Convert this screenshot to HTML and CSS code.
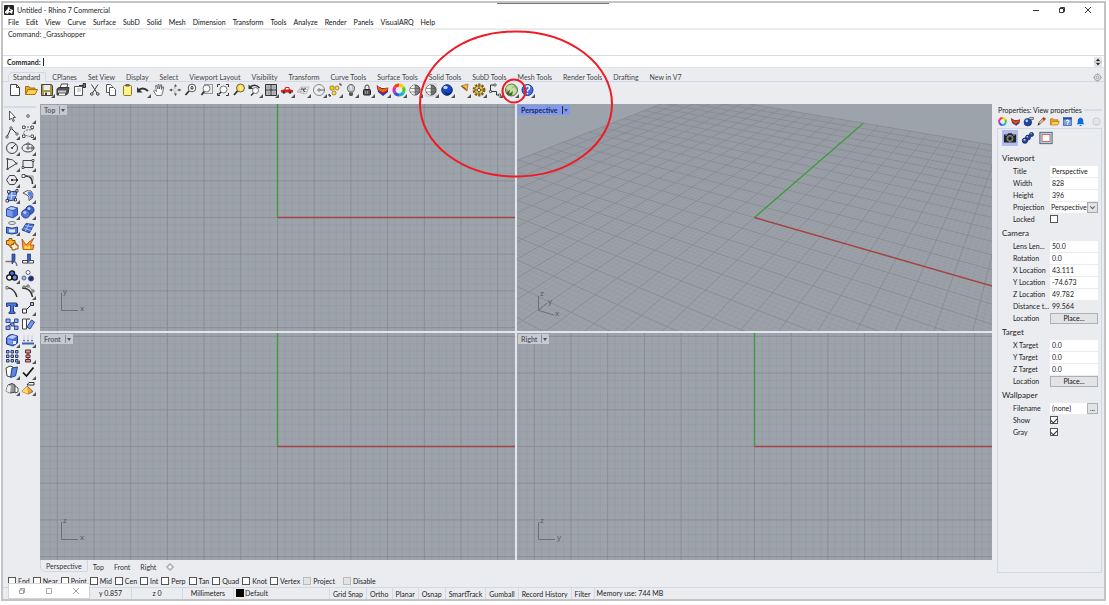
FILE: index.html
```html
<!DOCTYPE html>
<html lang="en">
<head>
<meta charset="utf-8">
<title>Untitled - Rhino 7 Commercial</title>
<link rel="stylesheet" href="styles.css">
</head>
<body>
<div class="window">
  <header class="titlebar">
    <svg class="logo" viewBox="0 0 10 10"><rect width="10" height="10" rx="1" fill="#222"/><path d="M1 8C1 5 3 6 4 3L5 1 6 4 9 5 8 9 5 7 4 9Z" fill="#fff"/><path d="M5 4L7 6 5 6Z" fill="#222"/></svg>
    <h1 class="title">Untitled - Rhino 7 Commercial</h1>
    <div class="winbuttons">
      <button class="winbutton" aria-label="Minimize"><svg viewBox="0 0 8 8"><path d="M1 4.500H7" stroke="#333"/></svg></button>
      <button class="winbutton" aria-label="Restore"><svg viewBox="0 0 8 8"><path d="M1.500 2.500H5.500V6.500H1.500ZM2.500 2V1.500H6.500V5.500H6" fill="none" stroke="#333"/></svg></button>
      <button class="winbutton" aria-label="Close"><svg viewBox="0 0 8 8"><path d="M1 1L7 7M7 1L1 7" stroke="#333"/></svg></button>
    </div>
  </header>
  <nav class="menubar">
    <button>File</button><button>Edit</button><button>View</button><button>Curve</button><button>Surface</button><button>SubD</button><button>Solid</button><button>Mesh</button><button>Dimension</button><button>Transform</button><button>Tools</button><button>Analyze</button><button>Render</button><button>Panels</button><button>VisualARQ</button><button>Help</button>
  </nav>
  <section class="history">Command: _Grasshopper</section>
  <div class="prompt">
    <label for="command">Command:</label>
    <i class="caret"></i>
    <input id="command" type="text">
    <button class="spin" aria-label="Scroll history"><svg viewBox="0 0 8 10"><path d="M0 5H8" stroke="#aaa"/><path d="M2 4L4 1.500 6 4ZM2 6L4 8.500 6 6Z" fill="#222"/></svg></button>
  </div>
  <nav class="tabs">
    <button class="tab current">Standard</button><button class="tab">CPlanes</button><button class="tab">Set View</button><button class="tab">Display</button><button class="tab">Select</button><button class="tab">Viewport Layout</button><button class="tab">Visibility</button><button class="tab">Transform</button><button class="tab">Curve Tools</button><button class="tab">Surface Tools</button><button class="tab">Solid Tools</button><button class="tab">SubD Tools</button><button class="tab">Mesh Tools</button><button class="tab">Render Tools</button><button class="tab">Drafting</button><button class="tab">New in V7</button>
    <button class="gear" aria-label="Toolbar options"><svg viewBox="0 0 10 10"><circle cx="5" cy="5" r="3.500" fill="none" stroke="#999"/><circle cx="5" cy="5" r="1.500" fill="none" stroke="#999"/><path d="M5 0V2M5 8V10M0 5H2M8 5H10" stroke="#aaa"/></svg></button>
  </nav>
  <div class="toolbar">
    <button class="tool" aria-label="New"><svg viewBox="0 0 16 16"><path d="M3.500 2.500H9.500L12.500 5.500V13.500H3.500Z" fill="#fff" stroke="#444"/><path d="M9.500 2.500V5.500H12.500" fill="none" stroke="#444"/></svg></button>
    <button class="tool" aria-label="Open"><svg viewBox="0 0 16 16"><path d="M2.500 12.500V4.500H6L7 6H12V8" fill="#e9a91e" stroke="#a87010"/><path d="M2.500 12.500L5 7.500H14.500L12 12.500Z" fill="#ffd152" stroke="#a87010"/></svg></button>
    <button class="tool fly" aria-label="Save"><svg viewBox="0 0 16 16"><path d="M2.500 2.500H12.500L13.500 4V13.500H2.500Z" fill="#a9993a" stroke="#444"/><path d="M4.500 3H11V8H4.500Z" fill="#e6ecf8"/><path d="M5 10H11V13H5Z" fill="#eee"/><path d="M6 10.500H8V13H6Z" fill="#444"/></svg></button>
    <button class="tool" aria-label="Print"><svg viewBox="0 0 16 16"><path d="M5 6L6.500 2H13L11.500 6Z" fill="#fff" stroke="#444"/><path d="M2 7L4 5.500H14L13 11.500 11 13H2Z" fill="#555" stroke="#333"/><path d="M3 8.500H11V10.500H3Z" fill="#ccc"/><path d="M4 11.500H10V13H4Z" fill="#fff"/></svg></button>
    <button class="tool" aria-label="Document properties"><svg viewBox="0 0 16 16"><path d="M3.500 4.500H11.500V13.500H3.500Z" fill="#fff" stroke="#555"/><path d="M6 7H10M6 9H10" stroke="#aaa"/><path d="M8 3.500H12M12 1.500H14.500V5.500H12Z" fill="#777" stroke="#333"/></svg></button>
    <button class="tool" aria-label="Cut"><svg viewBox="0 0 16 16"><path d="M4.500 2.500L10 11M11 2.500L5.500 11" stroke="#444"/><circle cx="4.800" cy="12" r="1.300" fill="none" stroke="#444"/><circle cx="10.800" cy="12" r="1.300" fill="none" stroke="#444"/></svg></button>
    <button class="tool" aria-label="Copy"><svg viewBox="0 0 16 16"><path d="M3.500 2.500H7.500L9.500 4.500V10.500H3.500Z" fill="#fff" stroke="#555"/><path d="M6.500 5.500H10.500L12.500 7.500V13.500H6.500Z" fill="#fff" stroke="#555"/></svg></button>
    <button class="tool" aria-label="Paste"><svg viewBox="0 0 16 16"><rect x="4.500" y="3.500" width="8" height="10" rx="1" fill="#fff38a" stroke="#8a7a20"/><path d="M6.500 2H10.500V4.500H6.500Z" fill="#666"/></svg></button>
    <button class="tool fly" aria-label="Undo"><svg viewBox="0 0 16 16"><path d="M4 8Q8 4.500 13 9" fill="none" stroke="#333" stroke-width="2"/><path d="M2 5V10.500H7.500Z" fill="#333"/></svg></button>
    <button class="tool" aria-label="Pan"><svg viewBox="0 0 16 16"><path d="M5.500 13.500L2.500 9 3.500 8 5.500 9.500 4.500 3.500 5.500 3.300 7 7V2.500H8L8.500 7 9.500 2.800H10.500V7.500L11.800 4.500 12.700 5 11.500 11 10.500 13.500Z" fill="#fff" stroke="#555" stroke-width=".8"/></svg></button>
    <button class="tool" aria-label="Rotate view"><svg viewBox="0 0 16 16"><path d="M8 4V12M4 8H12" stroke="#999"/><path d="M8.500 2L7 4.500H10ZM8.500 14L7 11.500H10ZM2 8L5 6.500V9.500ZM14.500 8L11.500 6.500V9.500Z" fill="#555"/><path d="M7 6.500H10V9.500H7Z" fill="#dde3e6"/></svg></button>
    <button class="tool" aria-label="Zoom dynamic"><svg viewBox="0 0 16 16"><circle cx="9" cy="6" r="3.800" fill="#f8fafb" stroke="#555"/><path d="M6 9L2.500 13" stroke="#333" stroke-width="1.800"/><path d="M9 4V8M7.500 5.500L9 4 10.500 5.500M7.500 6.500H10.500" fill="none" stroke="#555"/></svg></button>
    <button class="tool" aria-label="Zoom window"><svg viewBox="0 0 16 16"><path d="M5.500 2.500H13.500V11.500H5.500Z" fill="none" stroke="#444" stroke-dasharray="1 1"/><circle cx="7.500" cy="6.500" r="3.500" fill="#f8fafb" stroke="#777"/><path d="M5 9.500L2.500 13" stroke="#333" stroke-width="1.800"/></svg></button>
    <button class="tool" aria-label="Zoom extents"><svg viewBox="0 0 16 16"><path d="M2.500 5V2.500H5M11 2.500H13.500V5M2.500 11V13.500H5M11 13.500H13.500V11" fill="none" stroke="#333"/><circle cx="8.500" cy="7.500" r="3.500" fill="#f8fafb" stroke="#777"/><path d="M6 10L3.500 12.500" stroke="#333" stroke-width="1.500"/></svg></button>
    <button class="tool" aria-label="Zoom selected"><svg viewBox="0 0 16 16"><circle cx="9.500" cy="6" r="4" fill="#ffd94d" stroke="#666"/><path d="M9.500 3.500L12 6 9.500 8.500 7.500 6Z" fill="#fff08c"/><path d="M6.500 9L3 13" stroke="#333" stroke-width="1.800"/></svg></button>
    <button class="tool fly" aria-label="Undo view change"><svg viewBox="0 0 16 16"><path d="M3 5Q8 1 12.500 6" fill="none" stroke="#333" stroke-width="1.500"/><path d="M1.500 2.500V7H6.500Z" fill="#333"/><circle cx="8.500" cy="8.500" r="3" fill="#fafafa" stroke="#777"/><path d="M6.500 11L4 13.500" stroke="#333" stroke-width="1.500"/></svg></button>
    <button class="tool fly" aria-label="Four viewports"><svg viewBox="0 0 16 16"><path d="M2.500 2.500H13.500V13.500H2.500ZM8 2.500V13.500M2.500 8H13.500" fill="#b8bbc1" stroke="#333"/><path d="M5.500 3V13M11 3V13M3 5.500H13M3 11H13" stroke="#999" stroke-width=".5"/></svg></button>
    <button class="tool fly" aria-label="Right view"><svg viewBox="0 0 16 16"><path d="M2 8L5 7.500 6.500 5H10L11 7.500 14 8V10.500H2Z" fill="#d8221c"/><path d="M7 6H9.500V7.500H6.500Z" fill="#fff"/><circle cx="5" cy="10.500" r="1.300" fill="#333"/><circle cx="11" cy="10.500" r="1.300" fill="#333"/></svg></button>
    <button class="tool fly" aria-label="Construction plane"><svg viewBox="0 0 16 16"><path d="M2 10L6 5H14L11 12ZM4 7.500H13M3 9L12 9.500M7 5L5.500 11M10 5L8.500 12" fill="none" stroke="#aaa" stroke-width=".7"/><path d="M8 8L11 6M8 8L10 10M6 7H9" stroke="#555"/></svg></button>
    <button class="tool fly" aria-label="Object snap"><svg viewBox="0 0 16 16"><circle cx="8" cy="8" r="5.500" fill="#eeeff2" stroke="#888"/><path d="M8 8H14" stroke="#666"/><path d="M7 7H9V9H7Z" fill="#fff" stroke="#777"/></svg></button>
    <button class="tool fly" aria-label="Select"><svg viewBox="0 0 16 16"><rect x="3" y="4" width="4" height="4" rx="1" fill="#ffca2c" stroke="#8a6500" stroke-width=".7"/><rect x="8" y="4" width="4" height="4" rx="2" fill="#ffdc55" stroke="#8a6500" stroke-width=".7"/><rect x="5" y="9" width="4" height="4" rx="2" fill="#ffdc55" stroke="#8a6500" stroke-width=".7"/><path d="M12 2H14V4M2 12L4 14H2Z" fill="none" stroke="#333"/></svg></button>
    <button class="tool fly" aria-label="Hide"><svg viewBox="0 0 16 16"><path d="M6 10C3 7 4.500 2.500 8 2.500S13 7 10 10Z" fill="#bfc2c7" stroke="#666"/><path d="M6 10.500H10V13L9 14H7L6 13Z" fill="#555"/><path d="M7 5L8 4V8" fill="none" stroke="#fff"/></svg></button>
    <button class="tool fly" aria-label="Lock"><svg viewBox="0 0 16 16"><path d="M6 8V5Q6 3 8 3T10 5V8" fill="none" stroke="#444"/><rect x="4.500" y="7.500" width="7" height="5.500" rx="1" fill="#555" stroke="#222"/><path d="M6.500 9V12M8.500 9V12" stroke="#999"/></svg></button>
    <button class="tool fly" aria-label="Layers"><svg viewBox="0 0 16 16"><path d="M2 4L7 6 13 5V10L8 14 3 10Z" fill="#263b9c"/><path d="M2 3.500L7 7 13 5.500 12.500 8.500 8 11 3 8Z" fill="#f36a1c" stroke="#a02a12" stroke-width=".7"/><path d="M3 3.500L8 5.500 13 5" fill="none" stroke="#fff"/><path d="M3 8L8 11 13 8.500" fill="none" stroke="#c52020"/></svg></button>
    <button class="tool fly" aria-label="Object colour"><svg viewBox="0 0 16 16" fill="none" stroke-width="3"><path d="M8 3A5 5 0 0 1 12.300 5.500" stroke="#ffd000"/><path d="M12.300 5.500A5 5 0 0 1 12.300 10.500" stroke="#4cc828"/><path d="M12.300 10.500A5 5 0 0 1 8 13" stroke="#14b4d6"/><path d="M8 13A5 5 0 0 1 3.700 10.500" stroke="#3354e6"/><path d="M3.700 10.500A5 5 0 0 1 3.700 5.500" stroke="#d425bd"/><path d="M3.700 5.500A5 5 0 0 1 8 3" stroke="#fa3c22"/></svg></button>
    <button class="tool fly" aria-label="Shaded display"><svg viewBox="0 0 16 16"><circle cx="8" cy="8" r="5" fill="#888" stroke="#444"/><path d="M8 3A5 5 0 0 0 8 13Z" fill="#f5f5f5"/><path d="M8 3V13M3 6.500H13M3 10H13" stroke="#555" stroke-width=".6"/></svg></button>
    <button class="tool fly" aria-label="Rendered display"><svg viewBox="0 0 16 16"><path d="M2 1H14V15H2Z" fill="#d9dadd"/><circle cx="8" cy="8" r="5" fill="#777" stroke="#444"/><path d="M8 3A5 5 0 0 0 8 13Z" fill="#fff"/><path d="M8 3V13M3 6.500H13M3 10H13" stroke="#555" stroke-width=".6"/></svg></button>
    <button class="tool fly" aria-label="Render"><svg viewBox="0 0 16 16"><circle cx="8" cy="8" r="5.300" fill="#1448c4" stroke="#102a70"/><path d="M5 10Q11 13 13 8Q12 13 8 13Z" fill="#0a1d62"/><ellipse cx="6.500" cy="5.500" rx="2.200" ry="1.700" fill="#b9d5ff"/></svg></button>
    <button class="tool fly" aria-label="Spotlight"><svg viewBox="0 0 16 16"><path d="M6 4L13 2 12 9Z" fill="#ffb735" stroke="#8a6420" stroke-width=".7"/><path d="M6 4L9 5 11 7 12 9Z" fill="#694b1d"/></svg></button>
    <button class="tool fly" aria-label="Options"><svg viewBox="0 0 16 16"><circle cx="8" cy="8" r="5.200" fill="none" stroke="#806214" stroke-width="2.500" stroke-dasharray="2.200 1.100"/><circle cx="8" cy="8" r="4.300" fill="#efca50" stroke="#71530c" stroke-width=".7"/><circle cx="8" cy="8" r="1.600" fill="#fff" stroke="#555"/><path d="M8 4V6M4 8H6M10 8H12M8 10V12" stroke="#765a15"/></svg></button>
    <button class="tool fly" aria-label="Block edit"><svg viewBox="0 0 16 16"><path d="M7.500 3H3.500V9.500H9.500V13H13" fill="none" stroke="#333"/><path d="M7 2H9V4H7ZM2.500 8.500H4.500V10.500H2.500ZM11.500 12H13.500V14H11.500Z" fill="#fff" stroke="#333" stroke-width=".7"/></svg></button>
    <button class="tool fly" aria-label="Grasshopper"><svg viewBox="0 0 16 16"><circle cx="8.500" cy="8" r="6" fill="#9aba70" stroke="#5e793f"/><path d="M3 6Q6 1.500 11 3L8 7 11 5 14 8 12 12 9 13Z" fill="#c6dda8"/><path d="M3 11L7 7.500 6 12 10 9 9 13.500H5Z" fill="#46632e"/></svg></button>
    <button class="tool fly" aria-label="Help"><svg viewBox="0 0 16 16"><circle cx="8.500" cy="8" r="5.500" fill="#3f6ce0" stroke="#1c3a96"/><path d="M6.500 6Q6.500 4 8.500 4T10.500 6Q10.500 7.200 8.500 8.300V9.500M8.500 11V12.300" fill="none" stroke="#fff" stroke-width="1.500"/></svg></button>
  </div>

  <main class="main">
    <aside class="palette">
      <button class="tool" aria-label="Cancel"><svg viewBox="0 0 16 16"><path d="M5.500 3V12L7.500 10 9 13.500 10.300 13 9 9.500H11.500Z" fill="#fff" stroke="#333" stroke-width=".8"/></svg></button>
      <button class="tool fly" aria-label="Point"><svg viewBox="0 0 16 16"><circle cx="8" cy="8" r="1.300" fill="#fff" stroke="#555"/></svg></button>
      <button class="tool fly" aria-label="Polyline"><svg viewBox="0 0 16 16"><path d="M3 13L7 4 13 10" fill="none" stroke="#333"/><path d="M2 12H4V14H2ZM6 3H8V5H6ZM12 9H14V11H12Z" fill="#fff" stroke="#333" stroke-width=".7"/></svg></button>
      <button class="tool fly" aria-label="Control point curve"><svg viewBox="0 0 16 16"><path d="M4 3H12V6Q6 5 4 8T10 12.500" fill="none" stroke="#555" stroke-dasharray="2 1"/><path d="M2.500 2H5V4.500H2.500ZM11 2H13.500V4.500H11ZM2.500 11H5V13.500H2.500ZM11 11H13.500V13.500H11Z" fill="#fff" stroke="#333" stroke-width=".8"/></svg></button>
      <button class="tool fly" aria-label="Circle"><svg viewBox="0 0 16 16"><circle cx="8" cy="8" r="5.500" fill="none" stroke="#444"/><path d="M8 8L12 4" stroke="#333"/><circle cx="8" cy="8" r="1" fill="#333"/></svg></button>
      <button class="tool fly" aria-label="Ellipse"><svg viewBox="0 0 16 16"><ellipse cx="8" cy="8" rx="6" ry="4" fill="none" stroke="#444"/><path d="M7 3H9V5H7ZM7 7H9V9H7ZM11 7H13V9H11Z" fill="#fff" stroke="#333" stroke-width=".8"/></svg></button>
      <button class="tool fly" aria-label="Arc"><svg viewBox="0 0 16 16"><path d="M3.500 13V3Q9 2.500 12.500 7.500L3.500 13" fill="none" stroke="#444"/><path d="M2.500 2H4.500V4H2.500ZM11.500 6.500H13.500V8.500H11.500ZM2.500 12H4.500V14H2.500Z" fill="#555"/></svg></button>
      <button class="tool fly" aria-label="Rectangle"><svg viewBox="0 0 16 16"><path d="M3 4.500H13V11.500H3Z" fill="none" stroke="#444"/><path d="M2 10.500H4V12.500H2ZM12 3.500H14V5.500H12Z" fill="#fff" stroke="#333" stroke-width=".8"/></svg></button>
      <button class="tool fly" aria-label="Polygon"><svg viewBox="0 0 16 16"><path d="M5.500 3.500H10.500L13.500 8 10.500 12.500H5.500L2.500 8Z" fill="none" stroke="#444"/><path d="M8 8H13" stroke="#333"/><path d="M7 7H9V9H7ZM12 7H14V9H12Z" fill="#333"/></svg></button>
      <button class="tool fly" aria-label="Fillet"><svg viewBox="0 0 16 16"><path d="M3 4H6Q12.500 4 12.500 12" fill="none" stroke="#333" stroke-width="1.600"/><path d="M2 2.500H5V5.500H2Z" fill="#fff" stroke="#333" stroke-width=".8"/><path d="M8 4H13V9" fill="none" stroke="#999"/></svg></button>
      <button class="tool fly" aria-label="Surface from points"><svg viewBox="0 0 16 16"><path d="M5 4L13 3 11 12 3 13Z" fill="#6c8ee8" stroke="#24408e"/><path d="M4 8L12 7.500M8 4L7 12" stroke="#cfe0ff"/><path d="M3.500 2.500H6V5H3.500ZM12 1.500H14V4H12ZM2 11.500H4.500V14H2ZM10.500 10.500H12.500V13H10.500Z" fill="#fff" stroke="#222" stroke-width=".8"/></svg></button>
      <button class="tool fly" aria-label="Surface from curves"><svg viewBox="0 0 16 16"><path d="M3 5Q7 1.500 11 3Q14 6 12.500 10L9 12.500Q10 8 7 7Z" fill="#fff" stroke="#555"/><path d="M7.500 4L12 4Q13.500 7 12 10L10 11Q10.500 8 8 7Z" fill="#5d83e3"/></svg></button>
      <button class="tool fly" aria-label="Box"><svg viewBox="0 0 16 16"><path d="M2.500 5L7 2.500 13.500 4V11L9 13.800 2.500 12Z" fill="#456edb" stroke="#223a85" stroke-width=".8"/><path d="M2.500 5L7 2.500 13.500 4 9 6.500Z" fill="#bed0ff" stroke="#223a85" stroke-width=".6"/><path d="M3 5.500L8.500 7V13L3 11.500Z" fill="#7c9cf0"/></svg></button>
      <button class="tool fly" aria-label="Boolean union"><svg viewBox="0 0 16 16"><circle cx="9.800" cy="6" r="4.200" fill="#3b63cd" stroke="#243d85"/><circle cx="5.800" cy="9.800" r="4.200" fill="#5379df" stroke="#243d85"/><circle cx="4.800" cy="8.500" r="1.600" fill="#bad0ff"/><circle cx="9" cy="4.500" r="1.500" fill="#bad0ff"/></svg></button>
      <button class="tool fly" aria-label="Project curves"><svg viewBox="0 0 16 16"><ellipse cx="8" cy="3" rx="3.500" ry="1.500" fill="none" stroke="#777"/><path d="M2.500 7Q8 9.500 13.500 7V13Q8 15 2.500 13Z" fill="#5780e2" stroke="#254087"/><path d="M5 9Q8 10 11 9V12Q8 13 5 12Z" fill="#d9e7ff"/></svg></button>
      <button class="tool fly" aria-label="Mesh"><svg viewBox="0 0 16 16"><path d="M6 3.500L14 4.500 9.500 13 2 10Z" fill="#456ed0" stroke="#1c3070" stroke-width=".8"/><path d="M5 5.500L13 7M3.500 8L11 10.500M9 4L5 11.500" stroke="#bcd0ff" stroke-width=".8"/></svg></button>
      <button class="tool" aria-label="Join"><svg viewBox="0 0 16 16"><path d="M2.500 4.500H5V2.500H8V4.500H11V8H8.500V10H5V8.500H2.500Z" fill="#ffae20" stroke="#865010"/><path d="M7.500 8.500H9.500V7H12V9H14V13H11V14H8V11.500H6.500Z" fill="#ffeec0" stroke="#865010"/></svg></button>
      <button class="tool" aria-label="Explode"><svg viewBox="0 0 16 16"><path d="M3 13.500L2 3 6 9 9 6 14 2 10 9 14 9 13 13.500Z" fill="#ff9a1e" stroke="#a64c06" stroke-width=".8"/><path d="M4 12.500L5 9.500 8 11 10 9 10 13Z" fill="#ffdf56"/></svg></button>
      <button class="tool" aria-label="Trim"><svg viewBox="0 0 16 16"><path d="M1.500 9.500H8M8 10Q12 8 13 14" fill="none" stroke="#777" stroke-width="1.500"/><path d="M8 2H11V8L8 12Z" fill="#3860c4" stroke="#1f3472" stroke-width=".7"/></svg></button>
      <button class="tool" aria-label="Split"><svg viewBox="0 0 16 16"><path d="M2.500 8.500H13.500V11H2.500Z" fill="#fff" stroke="#444"/><path d="M7.500 2H10.500V8L7.500 11Z" fill="#3860c4" stroke="#1f3472" stroke-width=".7"/></svg></button>
      <button class="tool fly" aria-label="Group"><svg viewBox="0 0 16 16"><g stroke="#111" stroke-width="1.300"><circle cx="8" cy="5.500" r="2.600" fill="#4b6edb"/><circle cx="5.300" cy="9.500" r="2.600" fill="#fff"/><circle cx="10.700" cy="9.500" r="2.600" fill="#668ae8"/></g></svg></button>
      <button class="tool" aria-label="Ungroup"><svg viewBox="0 0 16 16"><g stroke="#4d5975" stroke-width=".9"><circle cx="8" cy="4.500" r="2" fill="#fff"/><circle cx="4" cy="10" r="2" fill="#9ebdff"/><circle cx="11" cy="10.500" r="2.600" fill="#182d82"/></g></svg></button>
      <button class="tool" aria-label="Edit points"><svg viewBox="0 0 16 16"><path d="M2 4Q10 3 13 13" fill="none" stroke="#333" stroke-width="1.400"/><path d="M2 2.500H4V5H2Z" fill="#fff" stroke="#444" stroke-width=".7"/></svg></button>
      <button class="tool fly" aria-label="Points on"><svg viewBox="0 0 16 16"><path d="M2 4Q11 4 12.500 13" fill="none" stroke="#333" stroke-width="1.500"/><path d="M2 4L8 1.500 14 8" fill="none" stroke="#888"/><path d="M3 2H5V4H3ZM7 1H9V3H7ZM12 6H14V8H12Z" fill="#fff" stroke="#333" stroke-width=".7"/></svg></button>
      <button class="tool" aria-label="Text"><svg viewBox="0 0 16 16"><path d="M2.500 3H12.500V6.500H11L10 5.500H9.500V12H11V13.500H5V12H6.500V5.500H5L4 6.500H2.500Z" fill="#4d78db" stroke="#243f8c"/><path d="M12.500 3L14 4V7L12.500 6.500Z" fill="#1e377f"/></svg></button>
      <button class="tool fly" aria-label="Move"><svg viewBox="0 0 16 16"><path d="M5 11L11 5" stroke="#222"/><path d="M2.500 9H6.500V13H2.500Z" fill="#fff" stroke="#333"/><path d="M10.500 2.500H13.500V5.500H10.500Z" fill="#a9c1f5" stroke="#333"/></svg></button>
      <button class="tool" aria-label="Copy objects"><svg viewBox="0 0 16 16"><path d="M4 10L12 5M4 5L12 11" stroke="#333"/><path d="M2 3H6V6.500H2ZM10.500 3H14V6.500H10.500ZM2 10H6V13.500H2ZM7 7H10V10H7ZM10.500 10H14V13.500H10.500Z" fill="#8caef7" stroke="#243e83" stroke-width=".9"/></svg></button>
      <button class="tool" aria-label="Rotate"><svg viewBox="0 0 16 16"><path d="M2.500 3H6.500V13H2.500Z" fill="#fff" stroke="#444"/><path d="M11.500 4L14.500 6 10 13 7 11Z" fill="#7099ef" stroke="#304784"/><path d="M7 3H10" stroke="#333"/></svg></button>
      <button class="tool fly" aria-label="Solid tools"><svg viewBox="0 0 16 16"><path d="M2.500 6Q4 2.500 8 2.500L13.500 4V11L9 14 2.500 12Z" fill="#456edb" stroke="#223a85"/><path d="M3 6L8 3 13 4 9 7Z" fill="#bcd0ff"/><path d="M3.500 7L8.500 8.500V13L3.500 11Z" fill="#7a9eee"/><path d="M9 9H12V12H9Z" fill="#eaf1ff"/></svg></button>
      <button class="tool fly" aria-label="Align"><svg viewBox="0 0 16 16"><path d="M2 11.500H14" stroke="#3e62bb" stroke-width="2"/><path d="M4 3V9M8 3V9M12 3V9" stroke="#c6cede"/><path d="M3 8H5L4 10ZM7 8H9L8 10ZM11 8H13L12 10Z" fill="#555"/></svg></button>
      <button class="tool fly" aria-label="Array"><svg viewBox="0 0 16 16"><g fill="#9db6f0" stroke="#1e2e5c" stroke-width=".9"><path d="M2.500 2.500H5V5H2.500ZM7 2.500H9.500V5H7ZM11.500 2.500H14V5H11.500ZM2.500 7H5V9.500H2.500ZM7 7H9.500V9.500H7ZM11.500 7H14V9.500H11.500ZM2.500 11.500H5V14H2.500ZM7 11.500H9.500V14H7ZM11.500 11.500H14V14H11.500Z"/></g></svg></button>
      <button class="tool fly" aria-label="Distribute"><svg viewBox="0 0 16 16"><path d="M8 2V14" stroke="#d62323" stroke-width="1.500"/><path d="M5.500 2H10.500V5H5.500ZM6 7H10V9.500H6ZM5.500 11.500H10.500V14H5.500Z" fill="#d89a9a" stroke="#55292c"/></svg></button>
      <button class="tool fly" aria-label="Scale"><svg viewBox="0 0 16 16"><path d="M2 4L6 2 9 3 7 13 3 12Z" fill="#fff" stroke="#444"/><path d="M8 4L13.500 3 11.500 12 6.500 13.500Z" fill="#5b86e6" stroke="#29458b"/></svg></button>
      <button class="tool fly" aria-label="Check"><svg viewBox="0 0 16 16"><path d="M3 8.500L6.500 12 13.500 3.500" fill="none" stroke="#111" stroke-width="1.700"/></svg></button>
      <button class="tool fly" aria-label="Mesh tools"><svg viewBox="0 0 16 16"><path d="M2 11L4 5 8 3.500 11 5 12 12 6 13Z" fill="#999" stroke="#444"/><path d="M4 5L7 6 6 13 2 11Z" fill="#eee"/><path d="M11 6L14 8V12L11 13Z" fill="#fff" stroke="#555"/></svg></button>
      <button class="tool fly" aria-label="Cone"><svg viewBox="0 0 16 16"><path d="M7 6L13 11.500 8 14 2 11.500Z" fill="#eca42c" stroke="#795015" stroke-width=".8"/><path d="M7 6L8 14 2 11.500Z" fill="#ffd76c"/><path d="M7 5L9 2.500H14V5H10Z" fill="#f5f5f5" stroke="#333"/></svg></button>
    </aside>

    <section class="workspace">
      <div class="viewports">
        <div class="viewport">
          <svg class="scene" data-view="plan"></svg>
          <button class="vlabel"><span>Top</span><b></b></button>
          <svg class="axes" viewBox="0 0 40 36"><path d="M11.500 8V25.500H28" /><text x="13" y="9">y</text><text x="30" y="26">x</text></svg>
        </div>
        <div class="viewport">
          <svg class="scene" data-view="perspective"></svg>
          <button class="vlabel active"><span>Perspective</span><b></b></button>
          <svg class="axes" viewBox="0 0 40 36"><path d="M11.500 11V25.500L20 18M11.500 25.500L27 30"/><text x="13" y="11">z</text><text x="21" y="19">y</text><text x="28" y="31">x</text></svg>
        </div>
        <div class="viewport">
          <svg class="scene" data-view="plan"></svg>
          <button class="vlabel"><span>Front</span><b></b></button>
          <svg class="axes" viewBox="0 0 40 36"><path d="M11.500 8V25.500H28" /><text x="13" y="9">z</text><text x="30" y="26">x</text></svg>
        </div>
        <div class="viewport">
          <svg class="scene" data-view="plan"></svg>
          <button class="vlabel"><span>Right</span><b></b></button>
          <svg class="axes" viewBox="0 0 40 36"><path d="M11.500 8V25.500H28" /><text x="13" y="9">z</text><text x="30" y="26">y</text></svg>
        </div>
      </div>
      <nav class="viewtabs">
        <button class="current">Perspective</button><button>Top</button><button>Front</button><button>Right</button><button aria-label="Add viewport"><svg viewBox="0 0 8 8"><path d="M3 1H5V3H7V5H5V7H3V5H1V3H3Z" fill="#fff" stroke="#888" stroke-width=".8"/></svg></button>
      </nav>
    </section>

    <aside class="panel">
      <h2 class="paneltitle"><span>Properties: View properties</span></h2>
      <nav class="paneltabs">
        <button aria-label="Colour"><svg viewBox="0 0 16 16" fill="none" stroke-width="3"><path d="M8 3A5 5 0 0 1 12.300 5.500" stroke="#ffd000"/><path d="M12.300 5.500A5 5 0 0 1 12.300 10.500" stroke="#4cc828"/><path d="M12.300 10.500A5 5 0 0 1 8 13" stroke="#14b4d6"/><path d="M8 13A5 5 0 0 1 3.700 10.500" stroke="#3354e6"/><path d="M3.700 10.500A5 5 0 0 1 3.700 5.500" stroke="#d425bd"/><path d="M3.700 5.500A5 5 0 0 1 8 3" stroke="#fa3c22"/></svg></button>
        <button aria-label="Layers"><svg viewBox="0 0 16 16"><path d="M2 4L7 6 14 5V10L9 14 3 10Z" fill="#263b9c"/><path d="M2 3.500L7 7 14 5.500 13 9 8 12 3 8Z" fill="#f0461c" stroke="#a02a12"/><path d="M3 3L8 5 13 4.500" fill="none" stroke="#fff"/></svg></button>
        <button aria-label="Rendering"><svg viewBox="0 0 16 16"><circle cx="7" cy="9" r="5.500" fill="#1d45a9" stroke="#142b68"/><circle cx="5.500" cy="7" r="2" fill="#bcd3ff"/><path d="M8 4L10 2H15V5H11Z" fill="#ddd" stroke="#333"/></svg></button>
        <button aria-label="Materials"><svg viewBox="0 0 16 16"><path d="M3 12L5 8 11 2 14 4 7 11Z" fill="#e6b59a" stroke="#845038"/><path d="M9 4L12 7 14 4 11 2Z" fill="#c32d20"/><path d="M2 14L4 10 6 12Z" fill="#333"/></svg></button>
        <button aria-label="Libraries"><svg viewBox="0 0 16 16"><path d="M2 13V4H6L7 5.500H13V8" fill="#e9a91e" stroke="#a87010"/><path d="M2 13L5 8H15L12.500 13Z" fill="#ffd152" stroke="#a87010"/></svg></button>
        <button aria-label="Help"><svg viewBox="0 0 16 16"><rect x="2" y="2" width="12" height="12" fill="#7b9de8" stroke="#3454ab"/><path d="M2 4H14" stroke="#254394" stroke-width="2"/><path d="M6 8Q6 6 8 6T10 8L8 10V11M8 12V13" fill="none" stroke="#fff" stroke-width="1.500"/></svg></button>
        <button aria-label="Notifications"><svg viewBox="0 0 16 16"><path d="M2 12L4 10V7Q4 3 8 2 12 3 12 7V10L14 12ZM6 13H10L8 15Z" fill="#126bd6"/></svg></button>
        <button class="push" aria-label="Panel options"><svg viewBox="0 0 16 16"><circle cx="8" cy="8" r="5" fill="none" stroke="#ced1d8" stroke-width="2"/><circle cx="8" cy="8" r="2" fill="none" stroke="#ced1d8"/></svg></button>
      </nav>
      <div class="panelbody">
        <div class="modes">
          <button class="on" aria-label="View"><svg viewBox="0 0 16 16"><path d="M1 4H5L6 2.500H10L11 4H15V13H1Z" fill="#222"/><circle cx="8" cy="8.500" r="3.500" fill="#555" stroke="#999"/><circle cx="8" cy="8.500" r="1.500" fill="#111"/><path d="M3 5H4M12 5H13" stroke="#ddd"/></svg></button>
          <button aria-label="Material"><svg viewBox="0 0 16 16"><g fill="#2549a5" stroke="#152855"><circle cx="12" cy="4" r="2.300"/><circle cx="8" cy="7.500" r="2.800"/><circle cx="4.500" cy="11" r="3"/></g><path d="M11 3H12M6.500 6.500H8M3 10H5" stroke="#c7dcff" stroke-width="1.500"/></svg></button>
          <button aria-label="Frame"><svg viewBox="0 0 16 16"><rect x="1" y="1.500" width="14" height="13" fill="#a8d5ea" stroke="#555"/><rect x="3.500" y="4" width="9" height="8" fill="#fff" stroke="#e4564c"/></svg></button>
        </div>
        <h3>Viewport</h3>
        <div class="row"><label for="title">Title</label><input id="title" value="Perspective"></div>
        <div class="row"><label for="w">Width</label><input id="w" value="828"></div>
        <div class="row"><label for="h">Height</label><input id="h" value="396"></div>
        <div class="row"><label for="proj">Projection</label><div class="pick"><select id="proj"><option>Perspective</option><option>Parallel</option></select><svg viewBox="0 0 10 10"><rect x=".5" y=".5" width="9" height="9" fill="#e4e4e6" stroke="#aaa"/><path d="M3 4L5 6 7 4" fill="none" stroke="#666"/></svg></div></div>
        <div class="row"><label for="lock">Locked</label><input class="check" id="lock" type="checkbox"></div>
        <h3>Camera</h3>
        <div class="row"><label for="lens">Lens Len...</label><input id="lens" value="50.0"></div>
        <div class="row"><label for="rot">Rotation</label><input id="rot" value="0.0"></div>
        <div class="row"><label for="cx">X Location</label><input id="cx" value="43.111"></div>
        <div class="row"><label for="cy">Y Location</label><input id="cy" value="-74.673"></div>
        <div class="row"><label for="cz">Z Location</label><input id="cz" value="49.782"></div>
        <div class="row"><label for="dist">Distance t...</label><input class="plain" id="dist" value="99.564" readonly></div>
        <div class="row"><label for="cplace">Location</label><button class="push-button" id="cplace">Place...</button></div>
        <h3>Target</h3>
        <div class="row"><label for="tx">X Target</label><input id="tx" value="0.0"></div>
        <div class="row"><label for="ty">Y Target</label><input id="ty" value="0.0"></div>
        <div class="row"><label for="tz">Z Target</label><input id="tz" value="0.0"></div>
        <div class="row"><label for="tplace">Location</label><button class="push-button" id="tplace">Place...</button></div>
        <h3>Wallpaper</h3>
        <div class="row"><label for="file">Filename</label><div class="filepick"><input id="file" value="(none)"><button class="push-button" aria-label="Browse">...</button></div></div>
        <div class="row"><label for="show">Show</label><input class="check" id="show" type="checkbox" checked></div>
        <div class="row"><label for="gray">Gray</label><input class="check" id="gray" type="checkbox" checked></div>
      </div>
    </aside>
  </main>

  <div class="osnap">
    <label><input class="check" type="checkbox">End</label><label><input class="check" type="checkbox">Near</label><label><input class="check" type="checkbox">Point</label><label><input class="check" type="checkbox">Mid</label><label><input class="check" type="checkbox">Cen</label><label><input class="check" type="checkbox">Int</label><label><input class="check" type="checkbox">Perp</label><label><input class="check" type="checkbox">Tan</label><label><input class="check" type="checkbox">Quad</label><label><input class="check" type="checkbox">Knot</label><label><input class="check" type="checkbox">Vertex</label><label class="apart"><input class="check" type="checkbox" disabled>Project</label><label class="apart"><input class="check" type="checkbox" disabled>Disable</label>
  </div>
  <footer class="status">
    <span class="cell first"></span><span class="cell coord">y 0.857</span><span class="cell coord wide">z 0</span><span class="cell coord wide">Millimeters</span><button class="cell layer"><i class="swatch"></i>Default</button><button class="cell">Grid Snap</button><button class="cell">Ortho</button><button class="cell">Planar</button><button class="cell">Osnap</button><button class="cell">SmartTrack</button><button class="cell">Gumball</button><button class="cell">Record History</button><button class="cell">Filter</button><span class="memory">Memory use: 744 MB</span>
  </footer>
  <div class="minimized">
    <button aria-label="Restore child"><svg viewBox="0 0 8 8"><path d="M1.500 3H5.500V6.500H1.500ZM2.500 3V1.500H6.500V5.500H5.500" fill="none" stroke="#888" stroke-width=".8"/></svg></button>
    <button aria-label="Maximize child"><svg viewBox="0 0 8 8"><path d="M1.500 1.500H6.500V6.500H1.500Z" fill="none" stroke="#999" stroke-width=".8"/></svg></button>
    <button aria-label="Close child"><svg viewBox="0 0 8 8"><path d="M1 1L7 7M7 1L1 7" stroke="#888" stroke-width=".8"/></svg></button>
  </div>
  <i class="topmark"></i>
  <svg class="callout" viewBox="0 0 200 150"><ellipse cx="100" cy="75" rx="96" ry="72.500"/><circle cx="98" cy="62" r="11.500"/></svg>
</div>
<script src="viewports.js"></script>
</body>
</html>
```

FILE: styles.css
```css
* { box-sizing: border-box; }
body {
  margin: 0;
  padding: 1px 3px 4px 1px;
  height: 100vh;
  background: #fff;
  color: #222;
  font: 7px/10px Lato, "Open Sans", sans-serif;
}
h1, h2, h3 { margin: 0; font: inherit; }
button, input, select {
  margin: 0;
  padding: 0;
  border: 0;
  border-radius: 0;
  background: none;
  color: inherit;
  font: inherit;
}
svg { display: block; }
button { white-space: nowrap; }

.window {
  position: relative;
  display: flex;
  flex-direction: column;
  height: 100%;
  border: 2px solid #c2c3c5;
  background: #ebecf0;
}
.titlebar { display: flex; align-items: center; height: 13px; padding-left: 1px; gap: 3px; background: #fff; }
.logo { width: 10px; height: 10px; }
.title { flex: 1; }
.winbuttons { display: flex; padding-right: 3px; }
.winbutton { display: grid; place-items: center; width: 26px; height: 12px; }
.winbutton svg { width: 8px; height: 8px; }
.menubar { display: flex; gap: 7px; height: 12px; padding-left: 5px; background: #fff; color: #111; }
.history { height: 27px; padding: 0 5px; border-top: 2px solid #ebecf0; background: #fff; line-height: 9px; }
.prompt { display: flex; align-items: center; height: 12px; padding-left: 4px; border-top: 1px solid #d7dce8; background: #fff; }
.prompt label { font-weight: 700; color: #222; }
.caret { width: 1px; height: 8px; margin-left: 2px; background: #222; }
.prompt input { flex: 1; outline: 0; }
.spin { width: 8px; height: 10px; margin-right: 2px; background: #e4e4e6; }

.tabs { display: flex; align-items: center; height: 15px; padding: 5px 2px 0 5px; border-bottom: 1px solid #d3d8e6; border-top: 1px solid #dfe2ea; color: #444; }
.tab { padding: 0 5px 0 6px; line-height: 9px; }
.tab.current { height: 10px; padding: 0 5px 0 4px; border: 1px solid #d3d8e6; border-bottom: 0; border-radius: 5px 2px 0 0; background: #ebecf0; }
.gear { margin-left: auto; }
.gear svg { width: 9px; height: 9px; }
.toolbar { display: flex; height: 22px; padding: 0 4px; }
.tool { position: relative; width: 16px; height: 16px; flex: none; }
.tool svg { width: 16px; height: 16px; }
.fly::after {
  content: "";
  position: absolute;
  right: 0;
  bottom: 0;
  border: 2px solid;
  border-color: transparent #555 #555 transparent;
}

.main { display: flex; flex: 1; min-height: 0; }
.palette { display: grid; grid-template-columns: 16px 16px; grid-auto-rows: 16px; grid-template-rows: 2px; align-content: start; width: 37px; padding: 2px 3px 0 1px; }
.palette::before { content: ""; grid-column: 1 / -1; height: 2px; background: #d3dbe8; }
.workspace { display: flex; flex: 1; flex-direction: column; min-width: 0; }
.viewports {
  display: grid;
  flex: 1;
  grid-template: 1fr 1fr / 1fr 1fr;
  gap: 2px;
  min-height: 0;
  background: #e1e5f0;
}
.viewport { position: relative; overflow: hidden; background: #9da3ab; }
.scene { position: absolute; inset: 0; width: 100%; height: 100%; }
.scene path { fill: none; }
.scene .ground { fill: #9ca1a9; }
.scene .minor { stroke: #90969e; stroke-width: .4; }
.scene .major { stroke: #858990; stroke-width: .8; }
.scene .green { stroke: #459a45; stroke-width: 1.5; }
.scene .red { stroke: #a34444; stroke-width: 1.5; }
.vlabel { position: absolute; top: 1px; left: 1px; display: flex; height: 10px; padding-left: 3px; gap: 4px; background: #c6cad0; color: #5b6067; font-weight: 700; }
.vlabel b { width: 8px; height: 8px; margin-top: 1px; border-left: 1px solid #858b94; }
.vlabel b::before { content: ""; display: block; margin: 3px 1px; width: 0; border: 2px solid transparent; border-top: 3px solid #4b5056; }
.vlabel.active { background: #8099ee; color: #1c2950; }
.vlabel.active b { border-color: #1c2950; }
.axes { position: absolute; left: 10px; bottom: 10px; width: 40px; height: 36px; fill: none; stroke: #6b7077; stroke-width: 1; }
.axes text { fill: #555a60; stroke: none; font: 8px "Open Sans", sans-serif; }
.viewtabs { display: flex; height: 13px; color: #333; line-height: 12px; }
.viewtabs button { padding: 0 5px; }
.viewtabs .current { height: 12px; border: 1px solid #d0d5e4; border-top: 0; border-radius: 0 0 2px 5px; }
.viewtabs svg { width: 8px; height: 8px; }

.panel { display: flex; flex-direction: column; width: 105px; margin: 1px 2px 0 5px; }
.paneltitle { display: flex; align-items: center; gap: 2px; padding-left: 1px; color: #222; white-space: nowrap; }
.paneltitle::after { content: ""; flex: 1; height: 2px; background: #d7dce8; }
.paneltabs { display: flex; align-items: center; gap: 2px; height: 13px; }
.paneltabs svg { width: 11px; height: 11px; }
.push { margin-left: auto; }
.panelbody { flex: 1; padding: 1px 3px 0 4px; border: 1px solid #d3d8e6; }
.modes { display: flex; gap: 2px; height: 20px; }
.modes button { display: grid; place-items: center; width: 16px; height: 16px; }
.modes .on { background: #b1bdf0; }
.modes svg { width: 14px; height: 14px; }
.panelbody h3 { height: 15px; font-size: 8px; line-height: 16px; }
.row { display: grid; grid-template-columns: 1fr 48px; align-items: center; height: 12px; padding-left: 11px; white-space: nowrap; }
.row input:not(.check) { width: 100%; min-width: 0; height: 11px; padding-left: 2px; background: #fff; }
.row .plain:not(.check) { background: none; }
.pick { display: grid; }
.pick select { grid-area: 1 / 1; height: 11px; width: 100%; padding-left: 1px; background: #fff; appearance: none; }
.pick svg { grid-area: 1 / 1; justify-self: end; width: 11px; height: 11px; pointer-events: none; }
.filepick { display: grid; grid-template-columns: 1fr 11px; }
.push-button { height: 11px; border: 1px solid #adb0b5; background: #e2e3e5; line-height: 8px; color: #111; }
.check {
  display: grid;
  place-items: center;
  width: 8px;
  height: 8px;
  border: 1px solid #555;
  background: #fff;
  appearance: none;
}
.check:checked::before { content: ""; width: 5px; height: 3px; margin-top: -1px; border: solid #333; border-width: 0 0 1px 1px; transform: rotate(-45deg); }
.check:disabled { border-color: #bbb; background: #e2e2e2; }

.osnap { display: flex; align-items: center; gap: 3px; height: 14px; padding: 2px 5px 0; }
.osnap label { display: flex; align-items: center; gap: 2px; }
.osnap .check { flex: none; }
.osnap .apart + .apart { margin-left: 5px; }
.status { display: flex; height: 12px; border-top: 1px solid #d3d8e6; white-space: nowrap; }
.cell { padding: 0 3px; border-right: 1px solid #d3d8e6; }
.first { width: 87px; }
.coord { width: 42px; padding: 0; text-align: center; }
.wide { width: 51px; }
.layer { display: flex; gap: 1px; width: 96px; padding-left: 2px; }
.swatch { width: 8px; height: 8px; margin-top: 1px; background: #000; }
.memory { padding-left: 2px; }

.minimized { position: absolute; left: 5px; bottom: 0; display: flex; justify-content: space-around; align-items: center; width: 82px; height: 16px; border: 1px solid #d5d5d8; background: #fff; }
.minimized svg { width: 8px; height: 8px; }
.topmark { position: absolute; top: 0; left: 494px; width: 112px; height: 1px; background: #777; }
.callout { position: absolute; top: 26px; left: 413px; width: 200px; height: 150px; fill: none; stroke: #ee1c25; stroke-width: 2; pointer-events: none; }
```

FILE: viewports.js
```js
const SVG = "http://www.w3.org/2000/svg";
const EXTENT = 70;
const UNIT = 7.34;

// Camera looking at the world origin with a 50 mm lens.
const camera = { distance: 99.564, focal: 473 };
const right = [0.866, 0.5];
const up = [-0.25, 0.433];
const forward = [-0.433, 0.75];
const dot = (v, x, y) => v[0] * x + v[1] * y;

const projections = {
  plan: (x, y) => [x * UNIT, -y * UNIT],
  perspective: (x, y) => {
    const s = camera.focal / (camera.distance + dot(forward, x, y));
    return [dot(right, x, y) * s, -dot(up, x, y) * s];
  },
};

function path(svg, name, d) {
  const node = document.createElementNS(SVG, "path");
  node.setAttribute("class", name);
  node.setAttribute("d", d);
  svg.append(node);
}

document.querySelectorAll(".scene").forEach((svg) => {
  const flat = svg.dataset.view === "plan";
  const project = projections[svg.dataset.view];
  const at = (x, y) => project(x, y).map((n) => n.toFixed(2)).join(" ");
  const line = (x1, y1, x2, y2) => `M${at(x1, y1)}L${at(x2, y2)}`;
  let minor = "";
  let major = "";
  for (let i = -EXTENT; i <= EXTENT; i++) {
    const d = line(i, -EXTENT, i, EXTENT) + line(-EXTENT, i, EXTENT, i);
    if (i % 5) minor += d;
    else major += d;
  }
  svg.setAttribute("viewBox", "-237.5 -113.5 475 227");
  svg.setAttribute("preserveAspectRatio", "xMidYMid slice");
  if (!flat) {
    path(svg, "ground", `M${at(-70, -70)}L${at(70, -70)}L${at(70, 70)}L${at(-70, 70)}Z`);
  }
  path(svg, "minor", minor);
  path(svg, "major", major);
  path(svg, "green", line(0, 0, 0, EXTENT));
  path(svg, "red", line(0, 0, EXTENT, 0));
});
```
